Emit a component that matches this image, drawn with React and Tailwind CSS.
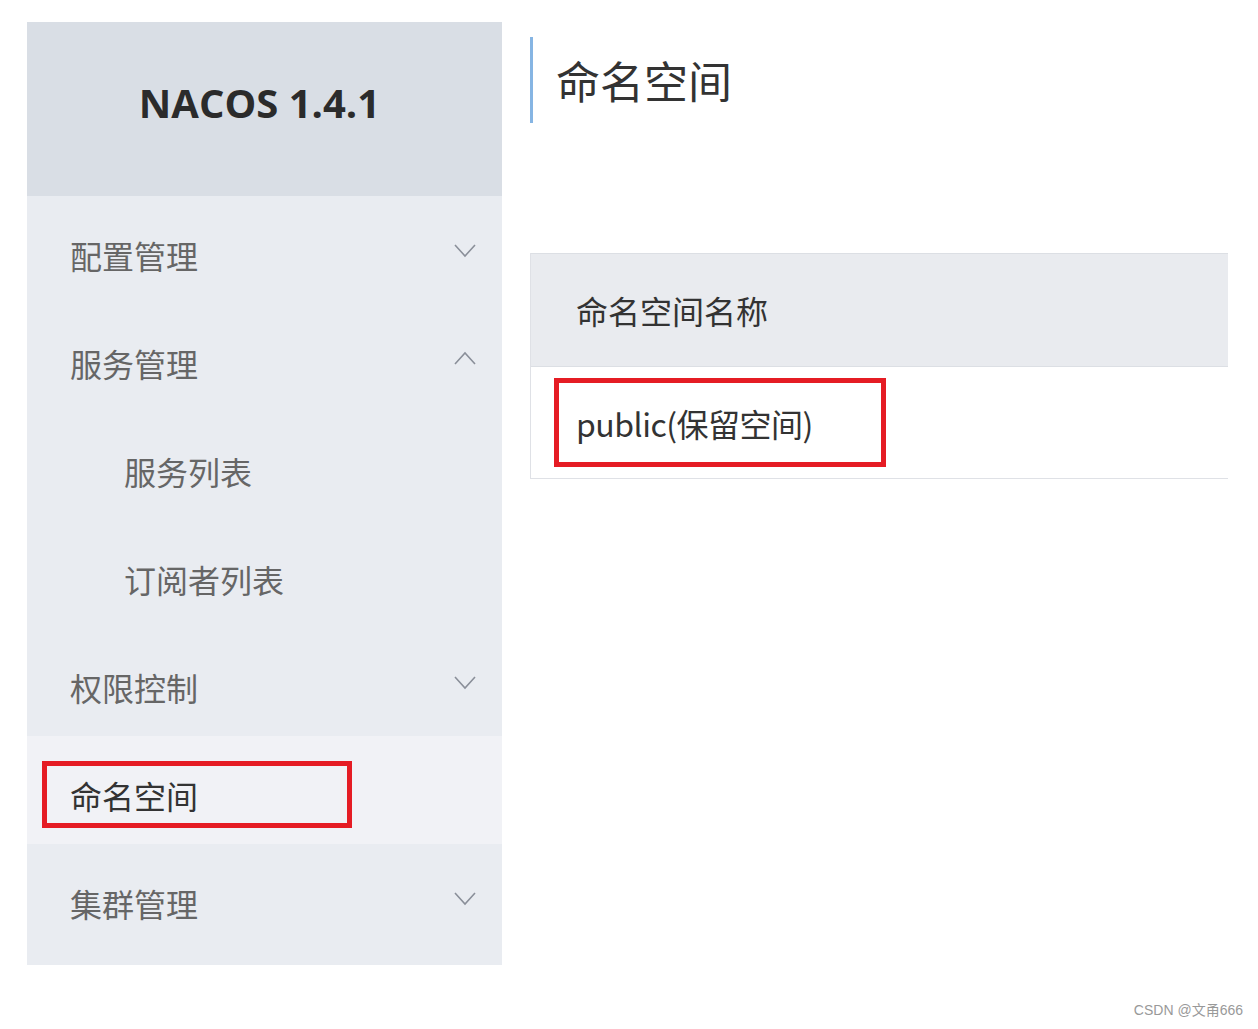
import React from 'react';

const font = { fontFamily: '"Noto Sans CJK SC", "Noto Sans", sans-serif' };

const Chevron = ({ up }) => (
  <svg width="24" height="16" viewBox="0 0 24 16" fill="none" className="text-[#8a8f99]">
    <path d={up ? 'M2 14 L12 3 L22 14' : 'M2 3 L12 14 L22 3'} stroke="currentColor" strokeWidth="1.6" />
  </svg>
);

const menu = [
  { label: '配置管理', arrow: 'down' },
  { label: '服务管理', arrow: 'up' },
  { label: '服务列表', sub: true },
  { label: '订阅者列表', sub: true },
  { label: '权限控制', arrow: 'down' },
  { label: '命名空间', active: true },
  { label: '集群管理', arrow: 'down' },
];

const App = () => {
  return (
    <div className="relative w-[1258px] h-[1029px] bg-white overflow-hidden" style={font}>
      <div className="flex pt-[22px] pl-[27px]">
        <aside className="w-[475px] shrink-0">
          <div className="h-[174px] bg-[#d9dee5] flex items-center justify-center">
            <h1 className="text-[40px] font-bold text-[#2b2b2b] mb-[12px] mr-[10px]" style={{ fontFamily: '"Open Sans", "Liberation Sans", sans-serif' }}>NACOS 1.4.1</h1>
          </div>
          <nav className="bg-[#e9ecf1] pb-[13px]">
            {menu.map((m, i) =>
              m.active ? (
                <div key={i} className="h-[108px] bg-[#f1f2f6] flex items-center pl-[15px]">
                  <div className="mt-[9px] w-[310px] h-[67px] border-[5px] border-[#e51c24] flex items-center pl-[23px]">
                    <span className="text-[32px] text-[#333]">{m.label}</span>
                  </div>
                </div>
              ) : (
                <div key={i} className={`h-[108px] flex items-center justify-between pr-[25px] ${m.sub ? 'pl-[97px]' : 'pl-[43px]'}`}>
                  <span className="text-[32px] text-[#666] mt-[10px]">{m.label}</span>
                  {m.arrow && <Chevron up={m.arrow === 'up'} />}
                </div>
              )
            )}
          </nav>
        </aside>

        <main className="flex-1 pl-[28px]">
          <div className="mt-[15px] h-[86px] border-l-[3px] border-[#86b5e3] flex items-center pl-[23px]">
            <h2 className="text-[44px] text-[#333] leading-none">命名空间</h2>
          </div>
          <div className="mt-[130px] w-[698px] border-l border-b border-[#dfe1e6]">
            <div className="h-[114px] bg-[#e9ebef] border-t border-b border-[#dcdfe4] flex items-center pl-[45px]">
              <span className="text-[32px] text-[#333]">命名空间名称</span>
            </div>
            <div className="h-[111px] flex items-center pl-[23px]">
              <div className="w-[332px] h-[89px] border-[5px] border-[#e51c24] flex items-center pl-[17px]">
                <span className="text-[32px] text-[#333] tracking-[-0.5px]">public(保留空间)</span>
              </div>
            </div>
          </div>
        </main>
      </div>
      <div className="absolute right-[15px] bottom-[8px] text-[14px] text-[#999]" style={{ fontFamily: '"Liberation Sans", "Noto Sans CJK SC", sans-serif' }}>CSDN @文甬666</div>
    </div>
  );
};

export default App;
